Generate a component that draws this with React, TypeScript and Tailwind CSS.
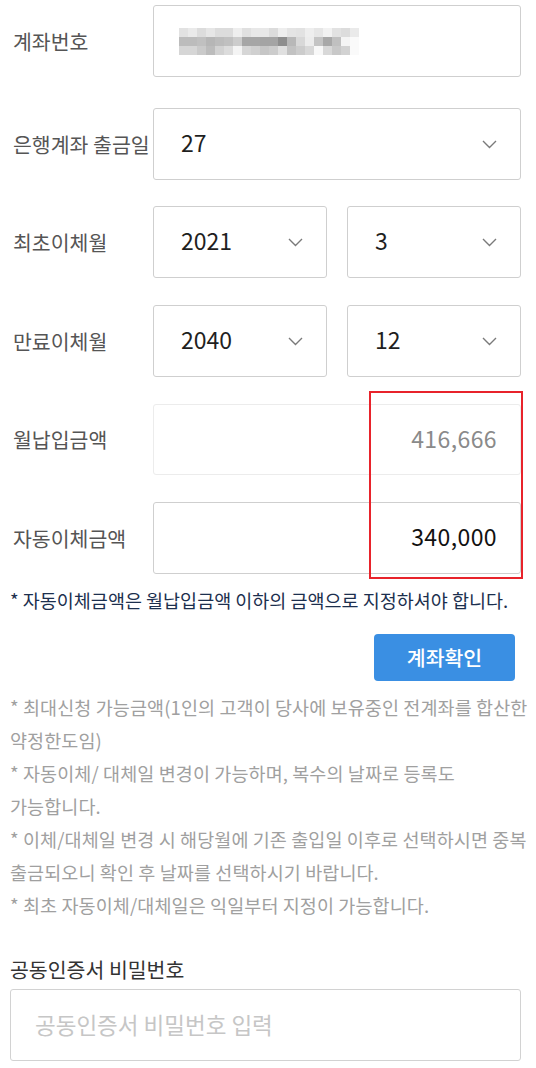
import React from "react";

const FONT = { fontFamily: '"Noto Sans CJK KR", "Noto Sans", sans-serif' };

// 모자이크 처리된 계좌번호 (3 x 20 픽셀 블록)
const BLUR_ROWS = [
  ["e2", "ea", "dc", "e6", "dc", "dc", "ee", "e0", "e8", "e8", "dc", "ee", "e4", "e2", "ee", "e6", "f2", "e2", "dc", "ea"],
  ["bc", "bc", "c0", "b6", "bc", "c0", "cc", "a6", "a6", "a4", "a4", "8e", "b8", "d8", "ec", "c4", "a8", "c0", "f4", "fa"],
  ["d6", "d6", "ca", "bc", "d2", "dc", "f4", "d6", "d0", "c6", "cc", "e0", "c2", "cc", "d8", "f8", "d8", "c8", "d2", "fa"],
];

function Chevron() {
  return (
    <svg width="15" height="9" viewBox="0 0 15 9" className="shrink-0">
      <polyline points="1,1 7.5,7.5 14,1" fill="none" stroke="#7a7a7a" strokeWidth="1.4" />
    </svg>
  );
}

function SelectBox({ value, className = "" }: { value: string; className?: string }) {
  return (
    <div
      className={`flex h-[72px] items-center justify-between rounded-[3px] border border-[#cfcfcf] bg-white pl-[27px] pr-[23px] ${className}`}
    >
      <span className="-mt-[3px] text-[23px] leading-none text-[#1f1f1f]">{value}</span>
      <Chevron />
    </div>
  );
}

function Row({ label, children, className = "" }: { label: string; children: React.ReactNode; className?: string }) {
  return (
    <div className={`flex items-center ${className}`}>
      <div className="w-[140px] shrink-0 whitespace-nowrap text-[20.5px] text-[#555]">{label}</div>
      <div className="flex min-w-0 flex-1 gap-[20px]">{children}</div>
    </div>
  );
}

const NOTES = [
  "* 최대신청 가능금액(1인의 고객이 당사에 보유중인 전계좌를 합산한",
  "약정한도임)",
  "* 자동이체/ 대체일 변경이 가능하며, 복수의 날짜로 등록도",
  "가능합니다.",
  "* 이체/대체일 변경 시 해당월에 기존 출입일 이후로 선택하시면 중복",
  "출금되오니 확인 후 날짜를 선택하시기 바랍니다.",
  "* 최초 자동이체/대체일은 익일부터 지정이 가능합니다.",
];

export default function App() {
  return (
    <div className="relative min-h-[1068px] w-[536px] overflow-hidden bg-white" style={FONT}>
      <div className="flex flex-col pl-[13px] pr-[15px] pt-[5px]">
        <Row label="계좌번호">
          <div className="flex h-[72px] flex-1 items-center rounded-[3px] border border-[#cfcfcf] bg-white pl-[25px]">
            <svg width="180" height="27" viewBox="0 0 180 27">
              {BLUR_ROWS.map((row, r) =>
                row.map((c, i) => (
                  <rect key={`${r}-${i}`} x={i * 9} y={r * 9} width="9" height="9" fill={`#${c}${c}${c}`} />
                ))
              )}
            </svg>
          </div>
        </Row>

        <Row label="은행계좌 출금일" className="mt-[31px]">
          <SelectBox value="27" className="flex-1" />
        </Row>

        <Row label="최초이체월" className="mt-[26px]">
          <SelectBox value="2021" className="flex-1" />
          <SelectBox value="3" className="flex-1" />
        </Row>

        <Row label="만료이체월" className="mt-[27px]">
          <SelectBox value="2040" className="flex-1" />
          <SelectBox value="12" className="flex-1" />
        </Row>

        <Row label="월납입금액" className="mt-[27px]">
          <div className="flex h-[71px] flex-1 items-center justify-end rounded-[3px] border border-[#ececec] bg-white pr-[23px]">
            <span className="-mt-[3px] text-[23px] leading-none tracking-[0.4px] text-[#8a8a8a]">416,666</span>
          </div>
        </Row>

        <Row label="자동이체금액" className="mt-[27px]">
          <div className="flex h-[72px] flex-1 items-center justify-end rounded-[3px] border border-[#cfcfcf] bg-white pr-[23px]">
            <span className="-mt-[3px] text-[23px] leading-none tracking-[0.4px] text-[#111]">340,000</span>
          </div>
        </Row>
      </div>

      <div className="flex flex-col px-[10px]">
        <p className="mt-[14px] whitespace-nowrap text-[18.5px] leading-[25px] text-[#1c2f4e]">
          * 자동이체금액은 월납입금액 이하의 금액으로 지정하셔야 합니다.
        </p>

        <div className="mt-[21px] flex justify-end pr-[11px]">
          <button
            type="button"
            className="flex h-[47px] w-[141px] items-center justify-center rounded-[4px] bg-[#3a8fe3] text-[20.5px] font-medium text-white"
          >
            계좌확인
          </button>
        </div>

        <div className="mt-[10px] flex flex-col">
          {NOTES.map((line) => (
            <p key={line} className="whitespace-nowrap text-[18.5px] leading-[33px] tracking-[0.1px] text-[#a0a0a0]">
              {line}
            </p>
          ))}
        </div>

        <p className="mt-[33px] text-[20.5px] leading-[29px] text-[#333]">공동인증서 비밀번호</p>
        <div className="mt-[5px] mr-[5px] flex h-[72px] items-center rounded-[3px] border border-[#d2d2d2] bg-white pl-[24px]">
          <span className="text-[22.5px] text-[#c6c6c6]">공동인증서 비밀번호 입력</span>
        </div>
      </div>

      <div className="pointer-events-none absolute left-[369px] top-[391px] h-[188px] w-[154px] border-2 border-[#e8232b]" />
    </div>
  );
}
